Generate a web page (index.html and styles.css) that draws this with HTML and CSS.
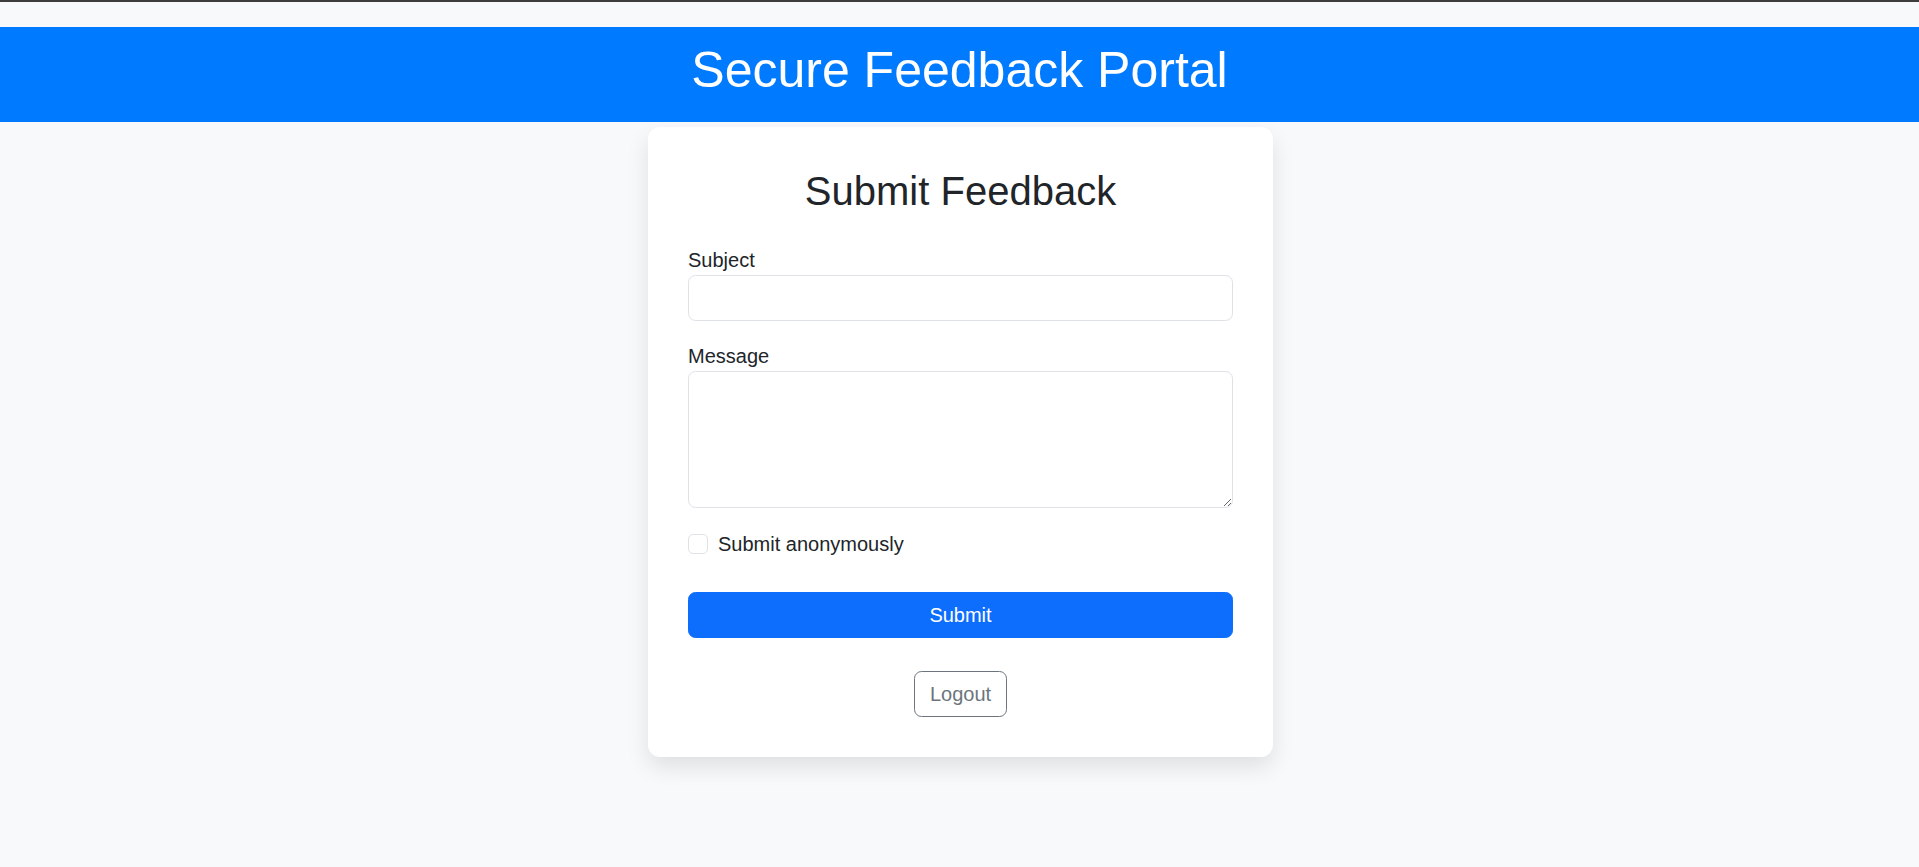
FILE: index.html
```html
<!DOCTYPE html>
<html lang="en">
<head>
<meta charset="utf-8">
<title>Secure Feedback Portal</title>
<link rel="stylesheet" href="styles.css">
</head>
<body>
<div class="topline"></div>
<header class="site-header">
  <h1 class="site-title">Secure Feedback Portal</h1>
</header>
<main class="page">
  <section class="card">
    <h2 class="card-title">Submit Feedback</h2>
    <form class="feedback-form">
      <div class="field">
        <label class="field-label" for="subject">Subject</label>
        <input class="field-input" id="subject" type="text">
      </div>
      <div class="field field-message">
        <label class="field-label" for="message">Message</label>
        <textarea class="field-input field-textarea" id="message" rows="4"></textarea>
      </div>
      <div class="check">
        <input class="check-box" id="anon" type="checkbox">
        <label class="check-label" for="anon">Submit anonymously</label>
      </div>
      <button class="btn-submit" type="button">Submit</button>
    </form>
    <div class="logout-row">
      <button class="btn-logout" type="button">Logout</button>
    </div>
  </section>
</main>
</body>
</html>
```
FILE: styles.css
```css
* { box-sizing: border-box; }

html, body {
  margin: 0;
  padding: 0;
}

html {
  background: #f8f9fa;
}

body {
  background: #f8f9fa;
  color: #212529;
  font-family: "Liberation Sans", Arial, sans-serif;
  font-size: 20px;
  line-height: 1.5;
  min-height: 100vh;
}

.topline {
  height: 2px;
  background: #3d3d3d;
}

.site-header {
  margin-top: 25px;
  background: #007bff;
  color: #fff;
  text-align: center;
  padding: 12.5px 0;
}

.site-title {
  margin: 0 0 10px;
  font-size: 50px;
  font-weight: 400;
  line-height: 60px;
}

.page {
  display: flex;
  justify-content: center;
  padding: 5px 0 60px 2px;
}

.card {
  width: 625px;
  background: #fff;
  border-radius: 12px;
  padding: 40px;
  box-shadow: 0 10px 22px rgba(0, 0, 0, 0.1);
}

.card-title {
  margin: 0 0 30px;
  text-align: center;
  font-size: 40px;
  font-weight: 400;
  line-height: 48px;
}

.feedback-form {
  display: flex;
  flex-direction: column;
}

.field {
  margin-bottom: 20px;
}

.field-message {
  margin-bottom: 21px;
}

.field-label {
  display: block;
  line-height: 30px;
}

.field-input {
  display: block;
  width: 100%;
  height: 46px;
  padding: 7px 15px;
  font-family: inherit;
  font-size: 20px;
  line-height: 30px;
  color: #212529;
  background: #fff;
  border: 1px solid #dee2e6;
  border-radius: 7.5px;
  outline: none;
}

.field-textarea {
  height: 137px;
  resize: vertical;
}

.check {
  display: flex;
  align-items: flex-start;
  line-height: 30px;
  margin-bottom: 33px;
}

.check-box {
  appearance: none;
  -webkit-appearance: none;
  width: 20px;
  height: 20px;
  margin: 5px 10px 0 0;
  border: 1px solid #dee2e6;
  border-radius: 5px;
  background: #fff;
  flex: none;
}

.check-label {
  font-size: 20px;
}

.btn-submit {
  width: 100%;
  height: 46px;
  padding: 7px 15px;
  font-family: inherit;
  font-size: 20px;
  line-height: 30px;
  color: #fff;
  background: #0d6efd;
  border: 1px solid #0d6efd;
  border-radius: 7.5px;
}

.logout-row {
  display: flex;
  justify-content: center;
  margin-top: 33px;
}

.btn-logout {
  height: 46px;
  padding: 7px 15px;
  font-family: inherit;
  font-size: 20px;
  line-height: 30px;
  color: #6c757d;
  background: transparent;
  border: 1px solid #6c757d;
  border-radius: 7.5px;
}
```
